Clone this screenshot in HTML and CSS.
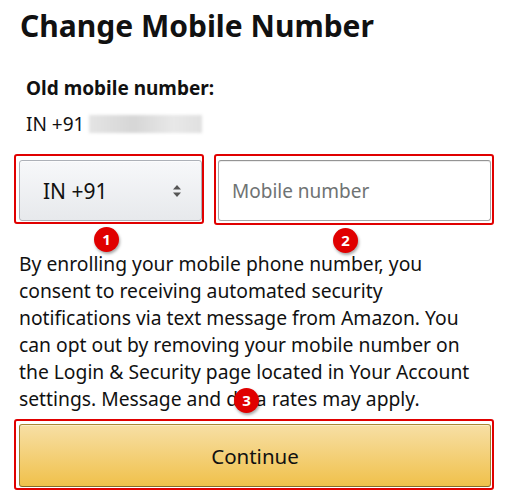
FILE: index.html
```html
<!DOCTYPE html>
<html lang="en">
<head>
    <meta charset="UTF-8">
    <meta name="viewport" content="width=device-width, initial-scale=1.0">
    <title>Change Mobile Number</title>
    <link rel="stylesheet" href="styles.css">
</head>
<body>

<div class="page">
    <h1 class="title">Change Mobile Number</h1>

    <div class="old-number">
        <div class="label">Old mobile number:</div>
        <div class="value">IN +91 <span class="blurred"></span></div>
    </div>

    <div class="phone-row">
        <div class="mark mark-select">
            <div class="select">
                <span>IN +91</span>
                <svg class="arrows" width="10" height="14" viewBox="0 0 10 14">
                    <path d="M1 5.5 L5 1 L9 5.5 Z" fill="#555"/>
                    <path d="M1 8.5 L5 13 L9 8.5 Z" fill="#555"/>
                </svg>
            </div>
            <span class="badge badge-1">1</span>
        </div>
        <div class="mark mark-input">
            <input class="input" type="tel" placeholder="Mobile number">
            <span class="badge badge-2">2</span>
        </div>
    </div>

    <p class="notice">By enrolling your mobile phone number, you consent to receiving automated security notifications via text message from Amazon. You can opt out by removing your mobile number on the Login &amp; Security page located in Your Account settings. Message and data rates may apply.</p>

    <div class="mark mark-button">
        <button class="continue">Continue</button>
        <span class="badge badge-3">3</span>
    </div>
</div>

</body>
</html>
```

FILE: styles.css
```css
body {
    margin: 0;
    background-color: #fff;
    color: #111;
    font-family: "Noto Sans", "Open Sans", Arial, sans-serif;
}

.page {
    padding: 0 15px 0 14px;
}

.title {
    margin: 0;
    padding: 4px 0 0 6px;
    font-size: 30px;
    font-weight: 700;
    line-height: 44px;
}

.old-number {
    padding: 28px 0 0 12px;
}

.label {
    font-size: 19px;
    font-weight: 700;
    line-height: 24px;
}

.value {
    display: flex;
    align-items: center;
    margin-top: 12px;
    font-size: 19px;
    line-height: 24px;
}

.blurred {
    display: inline-block;
    width: 113px;
    height: 18px;
    margin-left: 5px;
    background: linear-gradient(90deg, #e4e4e4, #d6d6d6 40%, #e8e8e8 75%, #e0e0e0);
    filter: blur(1.5px);
}

.phone-row {
    display: flex;
    gap: 10px;
    margin-top: 18px;
}

/* red annotation frames */
.mark {
    position: relative;
    box-sizing: border-box;
    border: 2px solid #e00000;
    border-radius: 3px;
    padding: 4px 0 1px 3px;
}

.mark-select {
    width: 190px;
    height: 70px;
}

.mark-input {
    flex: 1;
    height: 71px;
    padding: 4px 1px 2px 2px;
}

.select {
    box-sizing: border-box;
    display: flex;
    align-items: center;
    justify-content: space-between;
    height: 100%;
    padding: 0 19px 0 23px;
    border: 1px solid #adb1b8;
    border-radius: 3px;
    background: linear-gradient(#f7f8fa, #e7e9ec);
    box-shadow: 0 1px 0 rgba(255, 255, 255, 0.6) inset;
    font-size: 21px;
}

.input {
    box-sizing: border-box;
    width: 100%;
    height: 100%;
    margin: 0;
    padding: 0 13px;
    border: 1px solid #a6a6a6;
    border-top-color: #949494;
    border-radius: 3px;
    box-shadow: 0 1px 0 rgba(255, 255, 255, 0.5), 0 1px 0 rgba(0, 0, 0, 0.07) inset;
    font-family: inherit;
    font-size: 19px;
    color: #111;
    outline: none;
}

.input::placeholder {
    color: #6f7373;
}

.badge {
    position: absolute;
    top: 100%;
    width: 25px;
    height: 25px;
    margin-top: 5px;
    border-radius: 50%;
    background-color: #e00000;
    box-shadow: 1px 2px 3px rgba(0, 0, 0, 0.35);
    color: #fff;
    font-size: 15px;
    font-weight: 700;
    line-height: 25px;
    text-align: center;
}

.badge-1 {
    left: 78px;
}

.badge-2 {
    left: 117px;
}

.badge-3 {
    top: auto;
    bottom: 100%;
    left: 218px;
    margin: 0 0 8px 0;
}

.notice {
    width: 464px;
    margin: 25px 0 0 5px;
    font-size: 19.3px;
    line-height: 27px;
}

.mark-button {
    height: 71px;
    margin-top: 7px;
    padding: 3px 1px 1px 3px;
}

.continue {
    display: block;
    width: 100%;
    height: 100%;
    border: 1px solid #a88734;
    border-color: #a88734 #9c7e31 #846a29;
    border-radius: 3px;
    background: linear-gradient(#f7dfa5, #f0c14b);
    box-shadow: 0 1px 0 rgba(255, 255, 255, 0.4) inset;
    color: #111;
    font-family: inherit;
    font-size: 20.5px;
    cursor: pointer;
}
```
